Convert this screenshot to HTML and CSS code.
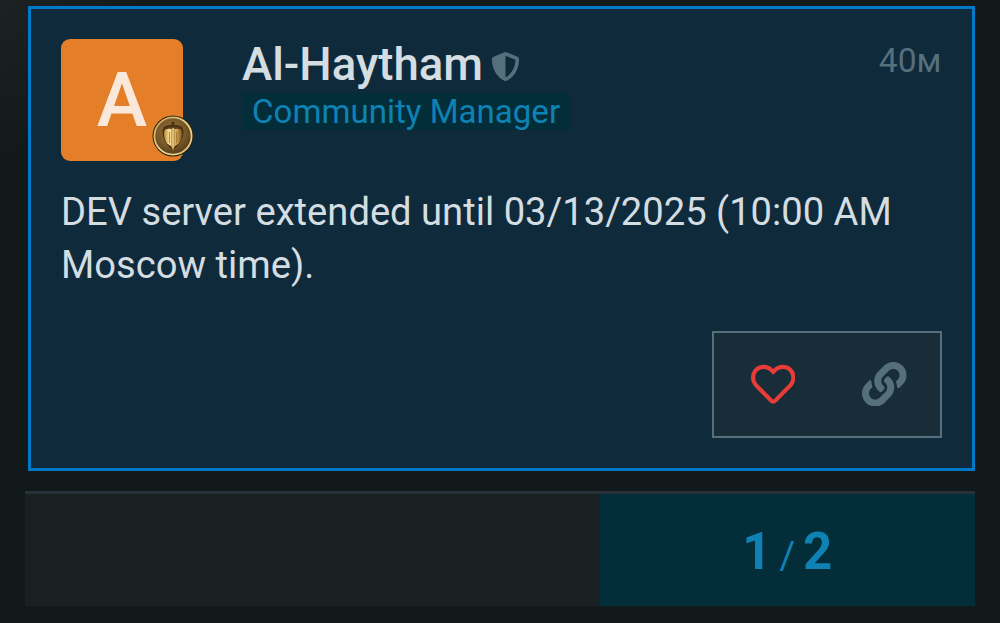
FILE: index.html
```html
<!DOCTYPE html>
<html lang="en">
<head>
    <meta charset="UTF-8">
    <meta name="viewport" content="width=device-width, initial-scale=1.0">
    <title>Al-Haytham</title>
    <link rel="stylesheet" href="styles.css">
</head>
<body>
    <div class="post">
        <div class="post-header">
            <div class="avatar">
                <span class="letter">A</span>
                <svg class="flair" viewBox="0 0 42 42">
                    <defs>
                        <radialGradient id="coin" cx="45%" cy="40%" r="62%">
                            <stop offset="0" stop-color="#8f6d32"/>
                            <stop offset="0.6" stop-color="#7a5a29"/>
                            <stop offset="1" stop-color="#54391a"/>
                        </radialGradient>
                        <linearGradient id="rim" x1="0" y1="0" x2="1" y2="1">
                            <stop offset="0" stop-color="#c19b4c"/>
                            <stop offset="0.5" stop-color="#ead694"/>
                            <stop offset="1" stop-color="#e2c57a"/>
                        </linearGradient>
                        <linearGradient id="gold" x1="0" y1="0" x2="1" y2="0">
                            <stop offset="0" stop-color="#b98a35"/>
                            <stop offset="0.3" stop-color="#fae39a"/>
                            <stop offset="0.65" stop-color="#d9ae55"/>
                            <stop offset="1" stop-color="#80591f"/>
                        </linearGradient>
                    </defs>
                    <circle cx="21" cy="21" r="20.5" fill="#2b1f0d"/>
                    <circle cx="21" cy="21" r="18.6" fill="url(#coin)" stroke="url(#rim)" stroke-width="1.8"/>
                    <path d="M12 11.500l5-1.500h8l5 1.500 1.500 4c0 8-3.500 14-10.500 20-7-6-10.500-12-10.500-20z" fill="#4a3216"/>
                    <path d="M13 14.500l4-1 4 1 4-1 4 1 1 3c0 4-1 8-3 11l-6 4-6-4c-2-3-3-7-3-11z" fill="url(#gold)"/>
                    <path d="M17.500 17v11M24.500 17v11" stroke="#9b732c" stroke-width="0.8"/>
                    <path d="M21 7v4" stroke="#48300f" stroke-width="2.500"/>
                    <path d="M15.500 12.500h11" stroke="#5b401a" stroke-width="1.500"/>
                    <path d="M19.700 13h2.600v19l-1.300 3.500-1.300-3.500z" fill="#e5c678" stroke="#8a662a" stroke-width="0.500"/>
                </svg>
            </div>
            <div class="names">
                <div class="username">
                    <span>Al-Haytham</span>
                    <svg class="shield" viewBox="0 0 512 512"><path d="M466.500 83.700l-192-80a48.150 48.150 0 0 0-36.900 0l-192 80C27.700 91.100 16 108.600 16 128c0 198.500 114.500 335.700 221.500 380.300 11.800 4.900 25.100 4.900 36.900 0C360.100 472.600 496 349.300 496 128c0-19.400-11.700-36.900-29.500-44.300zM256.100 446.300l-.1-381 175.900 73.300c-3.300 151.400-82.100 261.100-175.800 307.700z"/></svg>
                </div>
                <span class="user-title">Community Manager</span>
            </div>
            <span class="post-date">40м</span>
        </div>
        <p class="post-body">DEV server extended until 03/13/2025 (10:00 AM Moscow time).</p>
        <div class="post-controls">
            <svg class="icon like" viewBox="0 0 512 512"><path d="M458.400 64.300C400.600 15.700 311.300 23 256 79.300 200.700 23 111.400 15.600 53.600 64.300-21.600 127.600-10.600 230.800 43 285.500l175.400 178.700c10 10.200 23.400 15.900 37.600 15.900 14.300 0 27.600-5.600 37.600-15.800L469 285.600c53.500-54.700 64.700-157.900-10.600-221.300zm-23.600 187.500L259.400 430.500c-2.400 2.400-4.400 2.400-6.800 0L77.200 251.800c-36.500-37.200-43.900-107.600 7.300-150.700 38.900-32.700 98.900-27.800 136.500 10.500l35 35.700 35-35.700c37.800-38.500 97.800-43.200 136.500-10.600 51.100 43.100 43.500 113.900 7.300 150.800z"/></svg>
            <svg class="icon link" viewBox="0 0 512 512"><path d="M326.612 185.391c59.747 59.809 58.927 155.698.36 214.590-.11.12-.24.25-.36.37l-67.200 67.200c-59.270 59.270-155.699 59.262-214.960 0-59.270-59.260-59.270-155.700 0-214.960l37.106-37.106c9.840-9.840 26.786-3.300 27.294 10.606.648 17.722 3.826 35.527 9.690 52.721 1.986 5.822.567 12.262-3.783 16.612l-13.087 13.087c-28.026 28.026-28.905 73.660-1.155 101.960 28.024 28.579 74.086 28.749 102.325.51l67.200-67.190c28.191-28.191 28.073-73.757 0-101.830-3.701-3.694-7.429-6.564-10.341-8.569a16.037 16.037 0 0 1-6.947-12.606c-.396-10.567 3.348-21.456 11.698-29.806l21.054-21.055c5.521-5.521 14.182-6.199 20.584-1.731a152.482 152.482 0 0 1 20.522 17.197zM467.547 44.449c-59.261-59.262-155.690-59.270-214.960 0l-67.200 67.200c-.12.12-.25.25-.36.37-58.566 58.892-59.387 154.781.36 214.590a152.454 152.454 0 0 0 20.521 17.196c6.402 4.468 15.064 3.789 20.584-1.731l21.054-21.055c8.350-8.350 12.094-19.239 11.698-29.806a16.037 16.037 0 0 0-6.947-12.606c-2.912-2.005-6.640-4.875-10.341-8.569-28.073-28.073-28.191-73.639 0-101.830l67.200-67.190c28.239-28.239 74.300-28.069 102.325.51 27.750 28.300 26.872 73.934-1.155 101.960l-13.087 13.087c-4.350 4.350-5.769 10.790-3.783 16.612 5.864 17.194 9.042 34.999 9.690 52.721.509 13.906 17.454 20.446 27.294 10.606l37.106-37.106c59.271-59.259 59.271-155.699.001-214.959z"/></svg>
        </div>
    </div>
    <div class="progress">
        <div class="progress-nums">
            <b>1</b><span>/</span><b>2</b>
        </div>
    </div>
</body>
</html>
```
FILE: styles.css
```css
body {
    margin: 0;
    padding: 6px 25.5px 18px 25px;
    height: 623px;
    box-sizing: border-box;
    overflow: hidden;
    font-family: Roboto, sans-serif;
    color: #d3dde2;
    background: radial-gradient(circle at 0 0, #1c2224 0, #12191a 160px) #12191a;
}
.post {
    display: flex;
    flex-direction: column;
    box-sizing: border-box;
    height: 465px;
    margin-left: 3px;
    padding: 30px 30px 30px;
    border: 3px solid #0079c8;
    background: #0f2a3a;
}
.post-header {
    display: flex;
    height: 122px;
}
.avatar {
    position: relative;
    width: 122px;
    height: 122px;
    border-radius: 9px;
    background: #e57e29;
}
.letter {
    display: block;
    text-align: center;
    font-size: 76px;
    font-weight: 500;
    line-height: 123px;
    color: #fae8db;
}
.flair {
    position: absolute;
    right: -11px;
    bottom: 4px;
    width: 42px;
    height: 42px;
}
.names {
    flex: 1;
    margin-left: 59px;
}
.username {
    display: flex;
    align-items: center;
    height: 54px;
    font-size: 45.6px;
    font-weight: 500;
    line-height: 50px;
}
.username span {
    padding-bottom: 2px;
}
.shield {
    width: 29px;
    height: 29px;
    margin-left: 8px;
    fill: #566f7c;
}
.user-title {
    display: inline-block;
    padding: 0 10px;
    font-size: 33.1px;
    line-height: 37px;
    color: #0f82b4;
    background: #042d3a;
}
.post-date {
    font-size: 33.6px;
    line-height: 44px;
    color: #566f7c;
}
.post-body {
    margin: 25px 0 0;
    font-size: 38.15px;
    line-height: 53px;
}
.post-controls {
    display: flex;
    align-items: center;
    justify-content: space-between;
    align-self: flex-end;
    box-sizing: border-box;
    width: 230px;
    height: 107px;
    margin-top: auto;
    padding: 0 33px 1px 37px;
    border: 2px solid #566f7c;
    background: #182d38;
}
.icon {
    width: 44.5px;
    height: 44.5px;
}
.like {
    fill: #e93b37;
}
.link {
    fill: #566f7c;
}
.progress {
    display: flex;
    justify-content: flex-end;
    box-sizing: border-box;
    height: 115px;
    margin-top: 20px;
    border-top: 3px solid #263238;
    background: #192022;
}
.progress-nums {
    display: flex;
    align-items: baseline;
    justify-content: center;
    gap: 8px;
    width: 374.5px;
    font-size: 38px;
    line-height: 115px;
    color: #0f82b4;
    background: #042d3a;
}
.progress-nums b {
    font-size: 51px;
}
```
